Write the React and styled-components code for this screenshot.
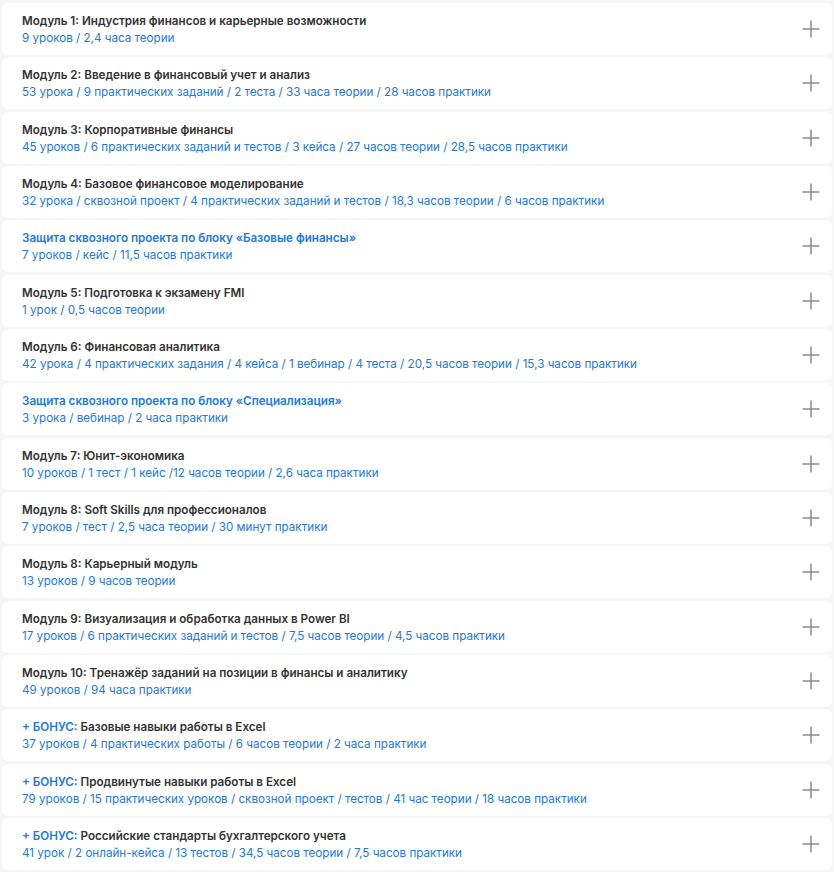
import styled, { createGlobalStyle } from "styled-components";

const modules = [
  { title: "Модуль 1: Индустрия финансов и карьерные возможности", info: "9 уроков / 2,4 часа теории" },
  { title: "Модуль 2: Введение в финансовый учет и анализ", info: "53 урока / 9 практических заданий / 2 теста / 33 часа теории / 28 часов практики" },
  { title: "Модуль 3: Корпоративные финансы", info: "45 уроков / 6 практических заданий и тестов / 3 кейса / 27 часов теории / 28,5 часов практики" },
  { title: "Модуль 4: Базовое финансовое моделирование", info: "32 урока / сквозной проект / 4 практических заданий и тестов / 18,3 часов теории / 6 часов практики" },
  { title: "Защита сквозного проекта по блоку «Базовые финансы»", info: "7 уроков / кейс / 11,5 часов практики", accent: true },
  { title: "Модуль 5: Подготовка к экзамену FMI", info: "1 урок / 0,5 часов теории" },
  { title: "Модуль 6: Финансовая аналитика", info: "42 урока / 4 практических задания / 4 кейса / 1 вебинар / 4 теста / 20,5 часов теории / 15,3 часов практики" },
  { title: "Защита сквозного проекта по блоку «Специализация»", info: "3 урока / вебинар / 2 часа практики", accent: true },
  { title: "Модуль 7: Юнит-экономика", info: "10 уроков / 1 тест / 1 кейс /12 часов теории / 2,6 часа практики" },
  { title: "Модуль 8: Soft Skills для профессионалов", info: "7 уроков / тест / 2,5 часа теории / 30 минут практики" },
  { title: "Модуль 8: Карьерный модуль", info: "13 уроков / 9 часов теории" },
  { title: "Модуль 9: Визуализация и обработка данных в Power BI", info: "17 уроков / 6 практических заданий и тестов / 7,5 часов теории / 4,5 часов практики" },
  { title: "Модуль 10: Тренажёр заданий на позиции в финансы и аналитику", info: "49 уроков / 94 часа практики" },
  { title: "Базовые навыки работы в Excel", info: "37 уроков / 4 практических работы / 6 часов теории / 2 часа практики", bonus: true },
  { title: "Продвинутые навыки работы в Excel", info: "79 уроков / 15 практических уроков / сквозной проект / тестов / 41 час теории / 18 часов практики", bonus: true },
  { title: "Российские стандарты бухгалтерского учета", info: "41 урок / 2 онлайн-кейса / 13 тестов / 34,5 часов теории / 7,5 часов практики", bonus: true },
];

function PlusIcon() {
  return (
    <svg width="18" height="18" viewBox="0 0 18 18" fill="none">
      <path d="M9 0.5V17.5M0.5 9H17.5" stroke="#8c8c8c" strokeWidth="1.5" />
    </svg>
  );
}

export default function App() {
  return (
    <>
      <GlobalStyle />
      <List>
        {modules.map((m, i) => (
          <Card key={i}>
            <Texts>
              <Title $accent={m.accent}>
                {m.bonus && <Bonus>+ БОНУС: </Bonus>}
                {m.title}
              </Title>
              <Info>{m.info}</Info>
            </Texts>
            <Toggle>
              <PlusIcon />
            </Toggle>
          </Card>
        ))}
      </List>
    </>
  );
}

const GlobalStyle = createGlobalStyle`
  body {
    margin: 0;
    background: #f6f6f7;
    font-family: Inter, "Noto Sans", sans-serif;
  }
`;

const List = styled.div`
  display: flex;
  flex-direction: column;
  gap: 2.33px;
  padding: 3px 2px 0 2px;
`;

const Card = styled.div`
  display: flex;
  align-items: center;
  justify-content: space-between;
  background: #ffffff;
  border-radius: 6px;
  padding: 10px 12px 8px 20px;
`;

const Texts = styled.div`
  display: flex;
  flex-direction: column;
`;

const Title = styled.div`
  font-size: 11.65px;
  line-height: 17px;
  font-weight: 600;
  color: ${(p) => (p.$accent ? "#2079e6" : "#333333")};
`;

const Bonus = styled.span`
  color: #2079e6;
`;

const Info = styled.div`
  font-size: 11.65px;
  line-height: 17px;
  color: #2079e6;
`;

const Toggle = styled.div`
  display: flex;
  width: 18px;
  height: 18px;
  margin-top: -2px;
`;
